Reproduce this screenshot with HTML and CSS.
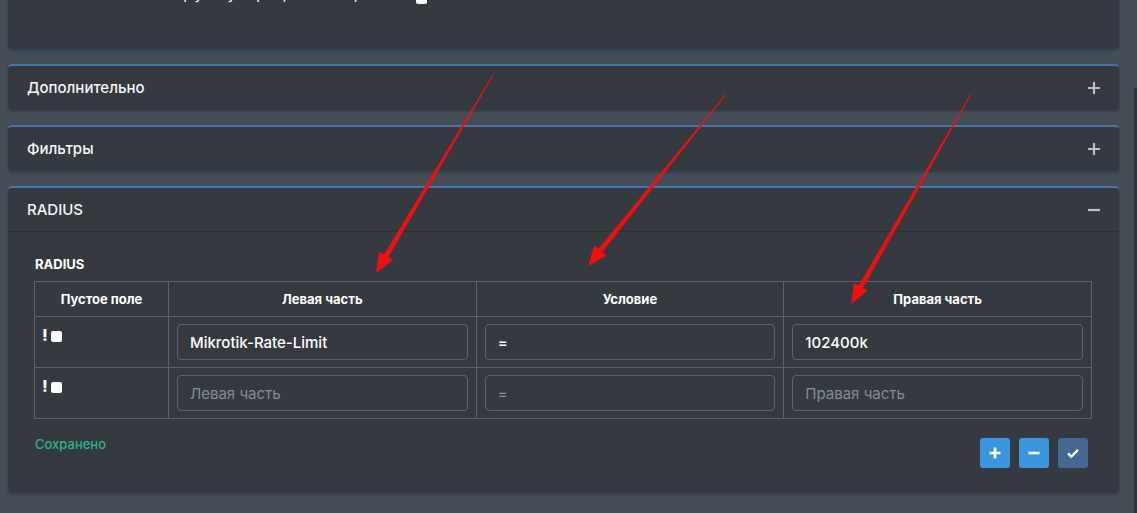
FILE: index.html
```html
<!DOCTYPE html>
<html lang="ru">
<head>
    <meta charset="UTF-8">
    <meta name="viewport" content="width=device-width, initial-scale=1.0">
    <title>RADIUS</title>
    <link rel="stylesheet" href="styles.css">
</head>
<body>

    <div class="layout">
        <div class="content">

            <!-- Верхняя карточка, видна только нижняя часть -->
            <div class="card card-top">
                <div class="top-line">Группу профиля сервиса <span class="mini-box"></span></div>
            </div>

            <div class="card">
                <div class="card-header">
                    <span class="card-title">Дополнительно</span>
                    <span class="toggle">
                        <svg width="14" height="14" viewBox="0 0 14 14"><path d="M7 1v12M1 7h12" stroke="#b9bfc7" stroke-width="2.2"/></svg>
                    </span>
                </div>
            </div>

            <div class="card">
                <div class="card-header">
                    <span class="card-title">Фильтры</span>
                    <span class="toggle">
                        <svg width="14" height="14" viewBox="0 0 14 14"><path d="M7 1v12M1 7h12" stroke="#b9bfc7" stroke-width="2.2"/></svg>
                    </span>
                </div>
            </div>

            <div class="card">
                <div class="card-header card-header-open">
                    <span class="card-title">RADIUS</span>
                    <span class="toggle">
                        <svg width="14" height="14" viewBox="0 0 14 14"><path d="M1 7h12" stroke="#b9bfc7" stroke-width="2.2"/></svg>
                    </span>
                </div>
                <div class="card-body">
                    <div class="section-label">RADIUS</div>

                    <table class="radius-table">
                        <thead>
                            <tr>
                                <th class="col-empty">Пустое поле</th>
                                <th>Левая часть</th>
                                <th>Условие</th>
                                <th>Правая часть</th>
                            </tr>
                        </thead>
                        <tbody>
                            <tr>
                                <td class="cell-check"><span class="excl">!</span><span class="check"></span></td>
                                <td><input class="field" type="text" value="Mikrotik-Rate-Limit"></td>
                                <td><input class="field" type="text" value="="></td>
                                <td><input class="field" type="text" value="102400k"></td>
                            </tr>
                            <tr>
                                <td class="cell-check"><span class="excl">!</span><span class="check"></span></td>
                                <td><input class="field" type="text" placeholder="Левая часть"></td>
                                <td><input class="field" type="text" placeholder="="></td>
                                <td><input class="field" type="text" placeholder="Правая часть"></td>
                            </tr>
                        </tbody>
                    </table>

                    <div class="card-footer">
                        <span class="saved">Сохранено</span>
                        <div class="actions">
                            <button class="btn btn-blue">
                                <svg width="14" height="14" viewBox="0 0 14 14"><path d="M7 1.5v11M1.5 7h11" stroke="#fff" stroke-width="2.6"/></svg>
                            </button>
                            <button class="btn btn-blue">
                                <svg width="14" height="14" viewBox="0 0 14 14"><path d="M1.5 7h11" stroke="#fff" stroke-width="2.6"/></svg>
                            </button>
                            <button class="btn btn-dark">
                                <svg width="14" height="14" viewBox="0 0 14 14"><path d="M2 7.3l3.3 3.2L12 3.8" fill="none" stroke="#fff" stroke-width="2.4"/></svg>
                            </button>
                        </div>
                    </div>
                </div>
            </div>

        </div>
        <div class="side-strip"></div>
    </div>

    <!-- Красные стрелки-пометки поверх скриншота -->
    <svg class="arrows" width="1137" height="513" viewBox="0 0 1137 513">
        <polygon fill="#f00f0f" points="493.4,75.3 388.35,257.07 393.1,259.9 376,273 379.3,251.7 384.05,254.53 492.6,74.7"/>
        <polygon fill="#f00f0f" points="726.39,94.31 602.45,251.97 606.74,255.41 588,266 594.26,245.39 598.55,248.83 725.61,93.69"/>
        <polygon fill="#f00f0f" points="971.43,94.25 863.07,287.84 867.84,290.57 851,304 853.96,282.63 858.73,285.36 970.57,93.75"/>
    </svg>

</body>
</html>
```

FILE: styles.css
```css
* {
    margin: 0;
    padding: 0;
    box-sizing: border-box;
}

body {
    font-family: Inter, 'Open Sans', 'Noto Sans', sans-serif;
    background-color: #444c56;
    color: #ffffff;
    overflow: hidden;
}

.layout {
    display: flex;
    height: 513px;
}

.content {
    flex: 1;
    padding: 0 15px 0 8px;
}

.side-strip {
    width: 3px;
    margin: 88px 0 0 0;
    background-color: #30353a;
}

/* Cards */
.card {
    background-color: #343a40;
    border-top: 2px solid #4a74a5;
    border-radius: 4px;
    box-shadow: 0 2px 3px rgba(0, 0, 0, 0.25);
    margin-bottom: 16px;
}

.card-top {
    border-top: none;
    margin-top: -40px;
    height: 88px;
    padding: 24px 0 0 165px;
}

.top-line {
    font-size: 15px;
    line-height: 20px;
    letter-spacing: 2.4px;
}

.mini-box {
    display: inline-block;
    width: 11px;
    height: 11px;
    background: #fff;
    border-radius: 2px;
    vertical-align: -5px;
}

.card-header {
    height: 43px;
    display: flex;
    align-items: center;
    justify-content: space-between;
    padding: 0 18px 0 19px;
}

.card-header-open {
    height: 44px;
    border-bottom: 1px solid #2c3035;
}

.card-title {
    font-size: 15px;
    font-weight: 500;
    color: #f4f5f6;
}

.toggle {
    display: flex;
    width: 14px;
    height: 14px;
}

/* Body */
.card-body {
    padding: 24px 27px 24px 26px;
}

.section-label {
    font-size: 13px;
    font-weight: 700;
    line-height: 16px;
    margin-bottom: 9px;
    margin-left: 1px;
}

.radius-table {
    width: 100%;
    border-collapse: collapse;
    table-layout: fixed;
}

.radius-table th,
.radius-table td {
    border: 1px solid #5c6269;
}

.radius-table th {
    font-size: 13px;
    font-weight: 700;
    height: 35px;
    text-align: center;
}

.radius-table .col-empty {
    width: 134px;
}

.radius-table td {
    padding: 7px 8px;
    vertical-align: top;
}

.cell-check {
    padding-top: 9px !important;
}

.excl {
    display: inline-block;
    font-size: 16px;
    font-weight: 800;
    line-height: 18px;
    vertical-align: top;
    margin-left: -1px;
}

.check {
    display: inline-block;
    width: 11px;
    height: 11px;
    margin: 5px 0 0 3px;
    background: #ffffff;
    border-radius: 2px;
    vertical-align: top;
}

.field {
    width: 100%;
    height: 36px;
    padding: 0 12px;
    background-color: #343a40;
    border: 1px solid #5c636b;
    border-radius: 4px;
    color: #ffffff;
    font-family: inherit;
    font-size: 15px;
    font-weight: 500;
    outline: none;
}

.field::placeholder {
    color: #868c94;
    font-weight: 400;
}

/* Footer */
.card-footer {
    display: flex;
    justify-content: space-between;
    align-items: flex-start;
    margin-top: 17px;
}

.saved {
    font-size: 13px;
    font-weight: 500;
    color: #2fb38a;
    margin-left: 1px;
}

.actions {
    display: flex;
    gap: 9px;
    margin-top: 2px;
    margin-right: 4px;
}

.btn {
    width: 30px;
    height: 30px;
    border: none;
    border-radius: 3px;
    display: flex;
    align-items: center;
    justify-content: center;
    cursor: pointer;
}

.btn-blue {
    background-color: #3a97dc;
}

.btn-dark {
    background-color: #436993;
}

/* Annotation overlay */
.arrows {
    position: absolute;
    left: 0;
    top: 0;
    pointer-events: none;
}
```
